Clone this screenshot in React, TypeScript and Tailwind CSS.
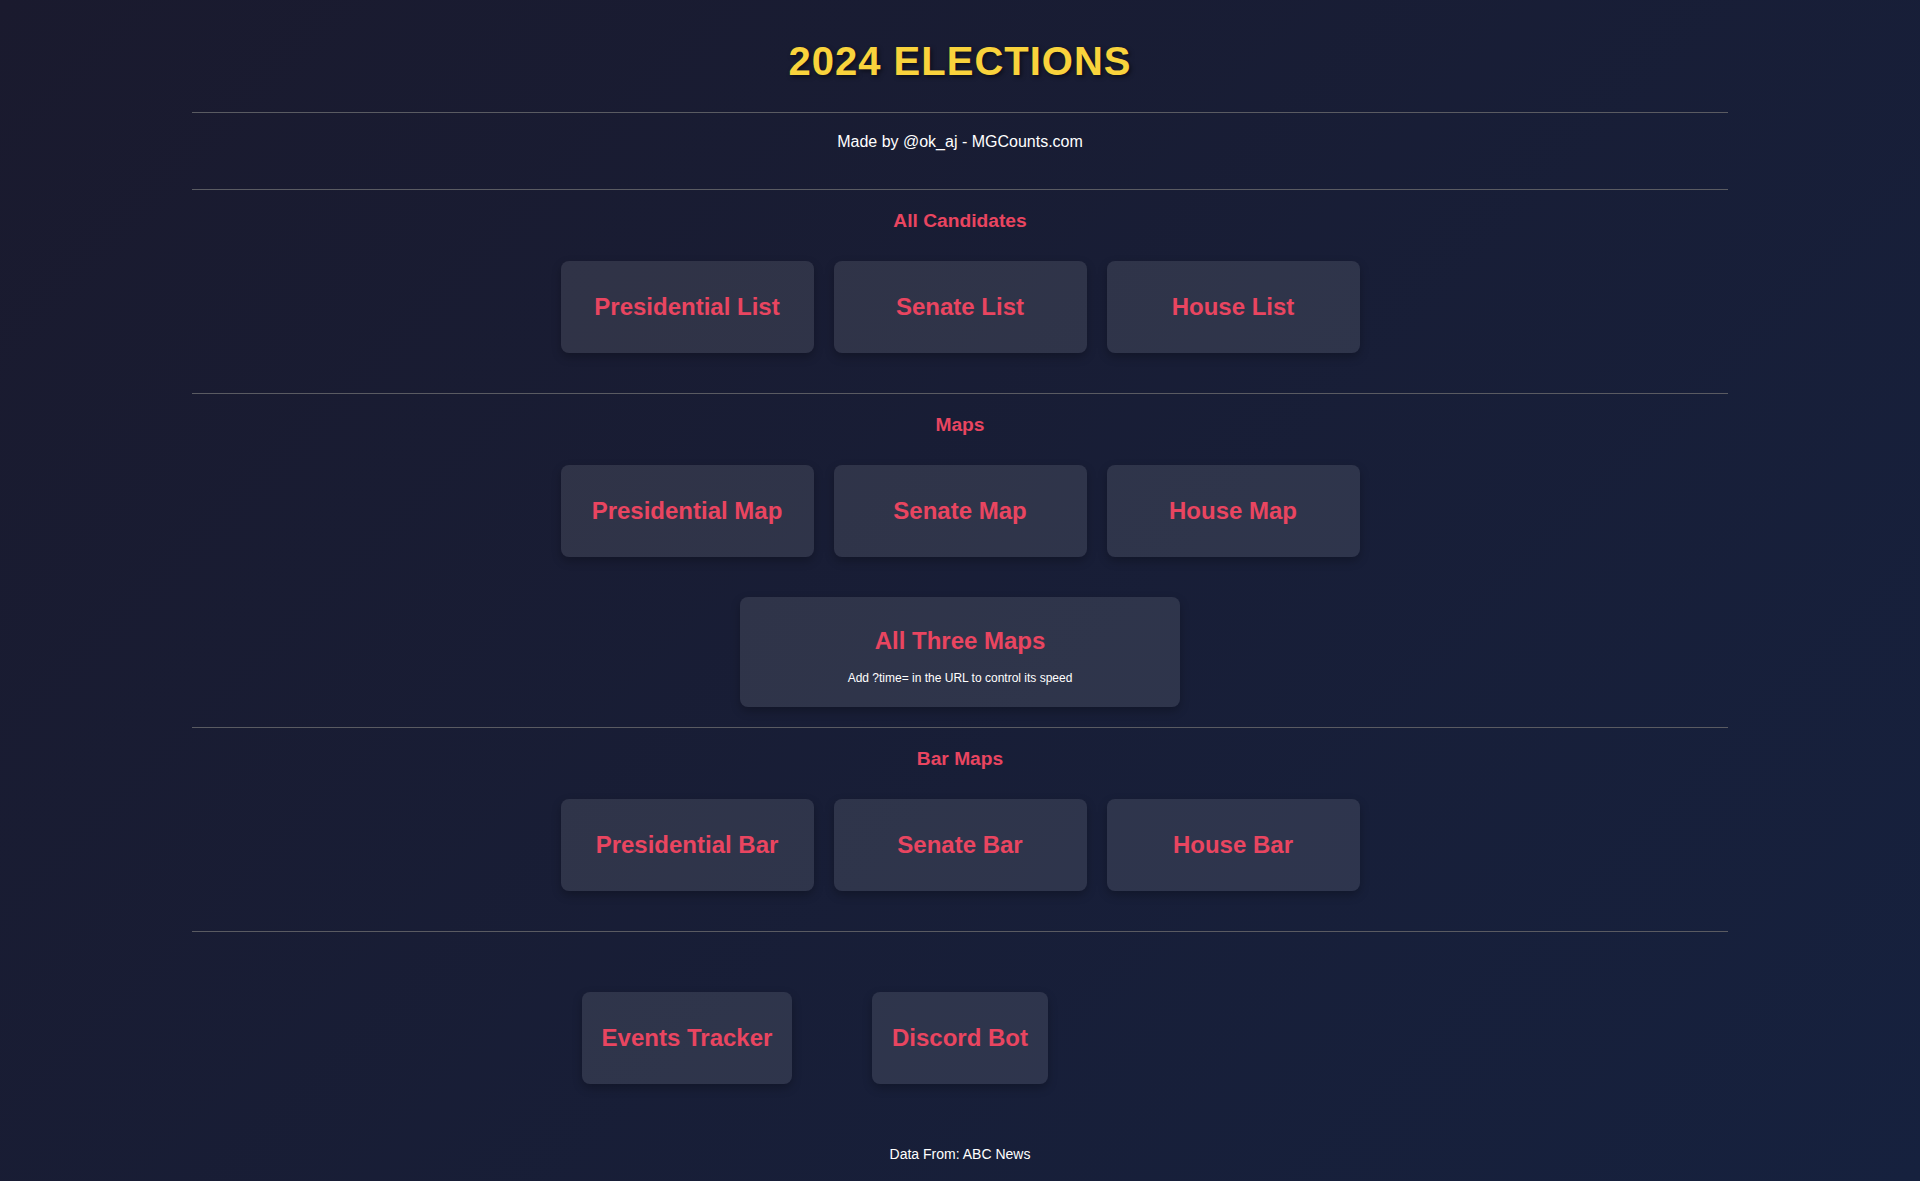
import type { ReactNode } from "react";

// secciones de botones
const sections = [
  { title: "All Candidates", links: ["Presidential List", "Senate List", "House List"] },
  { title: "Maps", links: ["Presidential Map", "Senate Map", "House Map"] },
  { title: "Bar Maps", links: ["Presidential Bar", "Senate Bar", "House Bar"] },
];

function Hr({ className = "" }: { className?: string }) {
  return <div className={`h-px w-full bg-[#5a5b62] ${className}`}></div>;
}

function LinkButton({ children, className = "" }: { children: ReactNode; className?: string }) {
  return (
    <a
      href="#"
      className={`flex h-[92px] items-center justify-center rounded-lg bg-white/10 text-[24px] font-bold leading-[28px] text-[#e94560] shadow-[0_4px_10px_rgba(0,0,0,0.25)] ${className}`}
    >
      {children}
    </a>
  );
}

export default function App() {
  return (
    <div className="min-h-screen bg-[linear-gradient(135deg,#1a1a2e,#16213e)] font-['Liberation_Sans',Arial,sans-serif] text-white">
      <div className="mx-auto flex w-[80%] flex-col items-center pb-[20px]">
        <h1 className="mt-[38px] text-[40px] font-bold leading-[46px] tracking-[1px] text-[#f9d33c] [text-shadow:2px_2px_4px_rgba(0,0,0,0.5)]">
          2024 ELECTIONS
        </h1>
        <Hr className="mt-[28px]" />
        <p className="mt-[20px] text-[16px] leading-[18px]">Made by @ok_aj - MGCounts.com</p>
        <Hr className="mt-[38px]" />

        {sections.map((s, i) => (
          <div key={s.title} className="flex w-full flex-col items-center">
            <h2 className="mt-[20px] text-[19.2px] font-bold leading-[22px] text-[#e94560]">{s.title}</h2>
            <div className="mt-[29px] grid grid-cols-[repeat(3,253px)] gap-x-[20px]">
              {s.links.map((l) => (
                <LinkButton key={l}>{l}</LinkButton>
              ))}
            </div>
            {i === 1 && (
              <a
                href="#"
                className="mt-[40px] flex h-[110px] w-[440px] flex-col items-center rounded-lg bg-white/10 pt-[30px] shadow-[0_4px_10px_rgba(0,0,0,0.25)]"
              >
                <span className="text-[24px] font-bold leading-[28px] text-[#e94560]">All Three Maps</span>
                <span className="mt-[16px] text-[12px] leading-[14px] text-white">
                  Add ?time= in the URL to control its speed
                </span>
              </a>
            )}
            <Hr className={i === 1 ? "mt-[20px]" : "mt-[40px]"} />
          </div>
        ))}

        <div className="mt-[60px] grid grid-cols-[repeat(3,253px)] gap-x-[20px]">
          <LinkButton className="justify-self-center px-5">Events Tracker</LinkButton>
          <LinkButton className="justify-self-center px-5">Discord Bot</LinkButton>
          <div></div>
        </div>

        <p className="mt-[62px] text-[14px] leading-[16px]">Data From: ABC News</p>
      </div>
    </div>
  );
}
